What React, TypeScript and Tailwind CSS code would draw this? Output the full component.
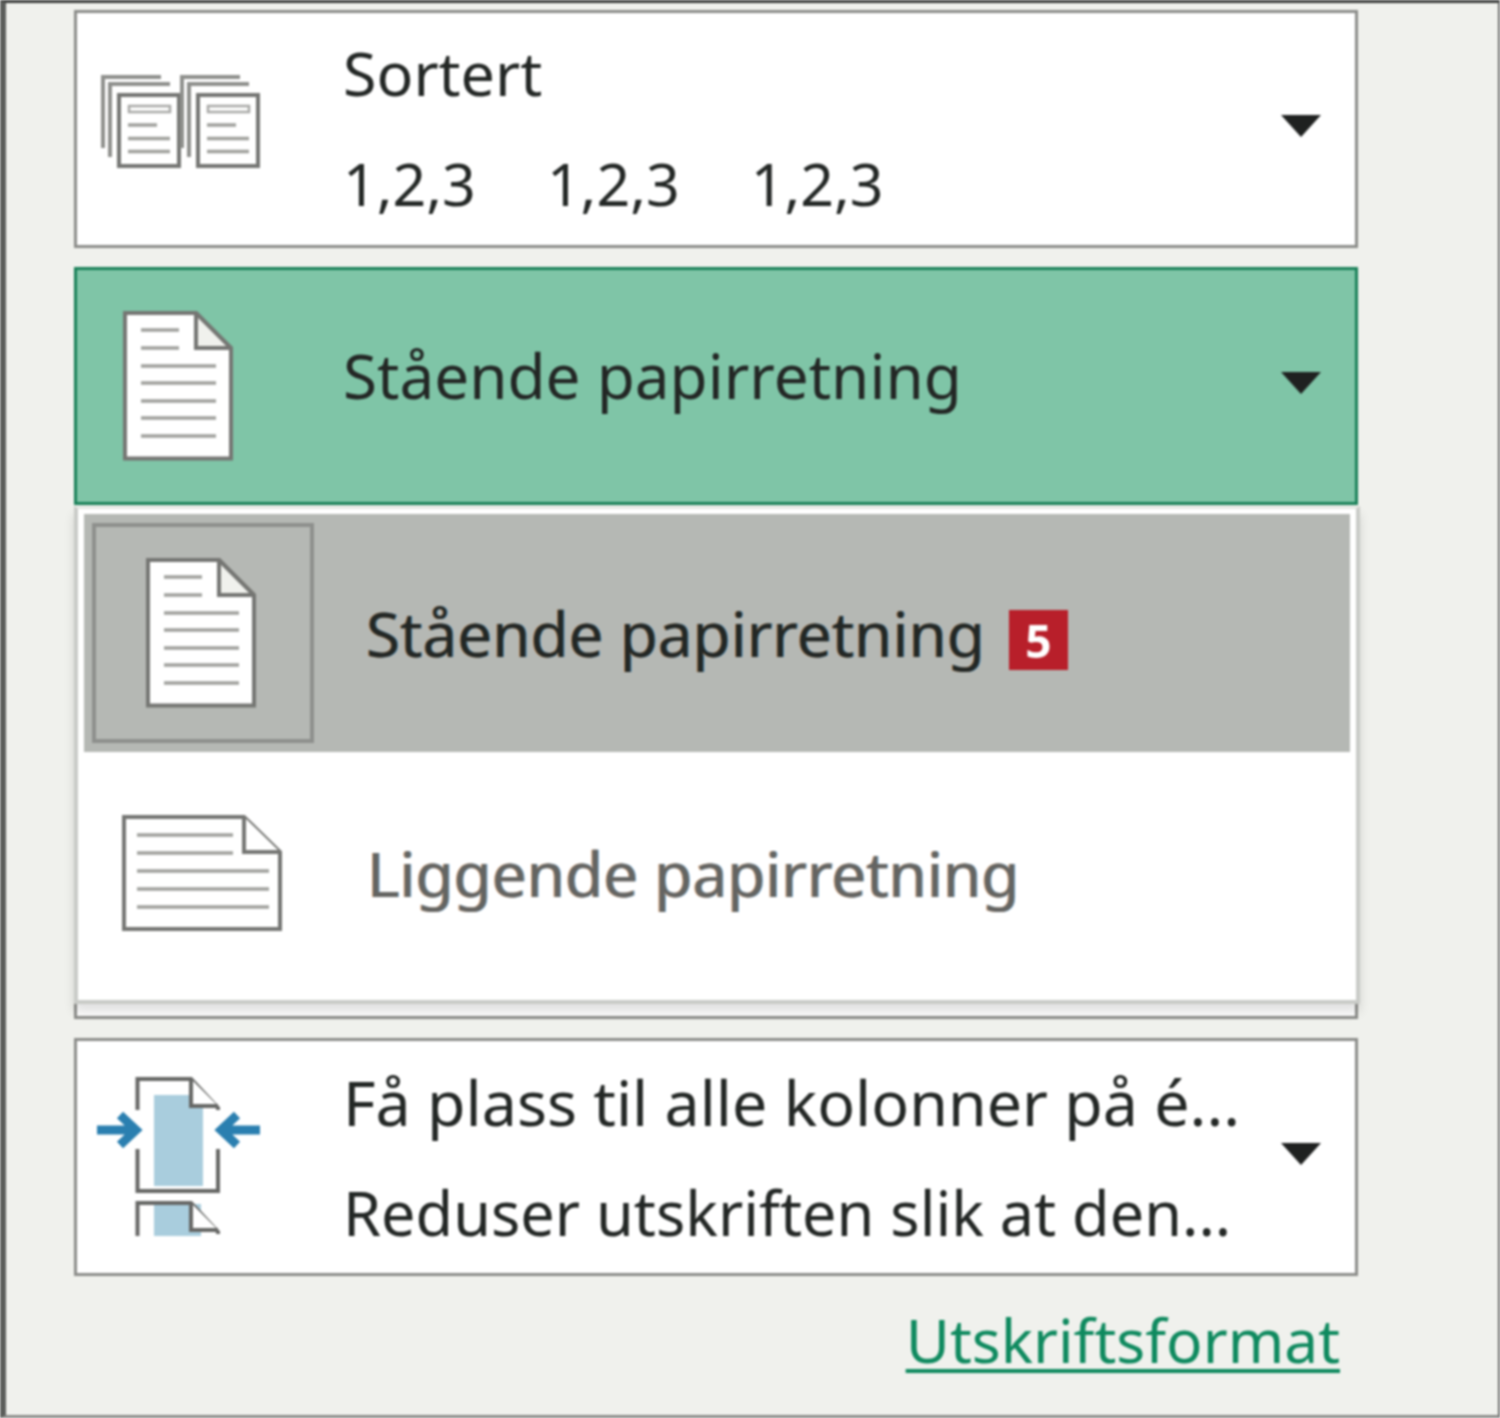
const lineColor = "#a0a19d";
const edge = "#757673";

function CollateSheet({ x }: { x: number }) {
  return (
    <g fill="none">
      <path d={`M${x + 3} 74V3H${x + 61}`} stroke="#8f908d" strokeWidth="4" />
      <path d={`M${x + 10} 83V10H${x + 70}`} stroke="#8f908d" strokeWidth="4" />
      <rect x={x + 19} y="21" width="60" height="71" fill="#fff" stroke={edge} strokeWidth="4" />
      <rect x={x + 29} y="32" width="41" height="6" stroke="#a8a9a6" strokeWidth="2.500" />
      <path d={`M${x + 28} 51H${x + 57}M${x + 28} 64.500H${x + 70}M${x + 28} 77.500H${x + 70}`} stroke={lineColor} strokeWidth="3.500" />
    </g>
  );
}

function CollateIcon() {
  return (
    <svg width="162" height="95" viewBox="0 0 162 95" className="block">
      <CollateSheet x={0} />
      <CollateSheet x={79} />
    </svg>
  );
}

function PortraitIcon() {
  return (
    <svg width="110" height="150" viewBox="0 0 110 150" className="block">
      <path d="M2 2H73L108 37V147.500H2Z" fill="#fff" stroke={edge} strokeWidth="4" />
      <path d="M73 2V37H108Z" fill="#f0f1ed" stroke={edge} strokeWidth="4" />
      <path
        d="M18 19H56M18 37H56M18 55H93M18 72H93M18 90H93M18 107H93M18 125H93"
        stroke={lineColor}
        strokeWidth="3.500"
      />
    </svg>
  );
}

function LandscapeIcon() {
  return (
    <svg width="160" height="116" viewBox="0 0 160 116" className="block">
      <path d="M2 2H122L158 37V114H2Z" fill="#fff" stroke={edge} strokeWidth="4" />
      <path d="M122 2V37H158" fill="#fff" stroke={edge} strokeWidth="4" />
      <path d="M15 20H111M15 38H111M15 56H147M15 74H147M15 92H147" stroke={lineColor} strokeWidth="3.500" />
    </svg>
  );
}

function FitColumnsIcon() {
  return (
    <svg width="166" height="160" viewBox="0 0 166 160" className="block">
      <rect x="58" y="18" width="49" height="91" fill="#a9cddd" />
      <rect x="58" y="127" width="47" height="32" fill="#a9cddd" />
      <g fill="none" stroke="#666765" strokeWidth="4">
        <path d="M41.500 33V2H95L122 31V33" />
        <path d="M95 2V29H122" fill="#fff" />
        <path d="M41.500 72V114H122V72" />
        <path d="M41.500 159V126H95L122 155V157" />
        <path d="M95 126V153H122" fill="#fff" />
      </g>
      <path d="M1 53H38M24 38L40 53L24 68" fill="none" stroke="#2a7fb0" strokeWidth="9" />
      <path d="M164 53H127M141 38L125 53L141 68" fill="none" stroke="#2a7fb0" strokeWidth="9" />
    </svg>
  );
}

function Caret() {
  return (
    <svg width="40" height="22" viewBox="0 0 40 22" className="block">
      <path d="M0 0H40L20 22Z" fill="#1f2120" />
    </svg>
  );
}

function Card({
  active,
  offset,
  icon,
  children,
}: {
  active?: boolean;
  offset?: string;
  icon?: React.ReactNode;
  children?: React.ReactNode;
}) {
  return (
    <div
      className={
        active
          ? "flex h-[237.5px] items-center border-[3px] border-[#1a8159] bg-[#7fc5a7]"
          : "flex h-[237.5px] items-center border-[3px] border-[#8c8d8a] bg-white"
      }
    >
      <div className={`w-[266px] shrink-0 ${offset ?? ""}`}>{icon}</div>
      <div className="min-w-0 flex-1">{children}</div>
      <div className="mr-[34px] mb-[5px] shrink-0">
        <Caret />
      </div>
    </div>
  );
}

export default function App() {
  return (
    <div
      className="h-[1418px] w-[1500px] overflow-hidden border-t-[3px] border-r-[2px] border-b-[3px] border-l-[6px] border-t-[#3a3c3a] border-r-[#6b6c6a] border-b-[#8a8b88] border-l-[#5c5e5b] bg-[#f0f1ed] text-[60px] leading-none text-[#232725] blur-[1px]"
      style={{ fontFamily: '"Noto Sans", "Open Sans", sans-serif' }}
    >
      <div className="relative ml-[68px] flex w-[1284px] flex-col gap-[19.500px] pt-[7px]">
        <Card offset="pl-[23px] pb-[14px]" icon={<CollateIcon />}>
          <div className="flex flex-col gap-[28px] pb-[2px]">
            <div className="h-[83px] text-[61px] leading-[83px]">Sortert</div>
            <div className="flex h-[83px] gap-[71px] text-[59px] leading-[83px]">
              <span>1,2,3</span>
              <span>1,2,3</span>
              <span>1,2,3</span>
            </div>
          </div>
        </Card>
        <Card active offset="pl-[46px]" icon={<PortraitIcon />}>
          <div className="pb-[22px] text-[62px]">Stående papirretning</div>
        </Card>
        <Card />
        <Card />
        <Card offset="pl-[19px]" icon={<FitColumnsIcon />}>
          <div className="flex flex-col gap-[28px]">
            <div className="h-[83px] truncate text-[62.700px] leading-[83px]">Få plass til alle kolonner på é...</div>
            <div className="h-[83px] truncate text-[61.200px] leading-[83px]">Reduser utskriften slik at den...</div>
          </div>
        </Card>
        <div className="flex justify-end pt-[15px] pr-[18px]">
          <a className="text-[60.500px] text-[#0f8a5f] underline decoration-[4px] underline-offset-[6px]">Utskriftsformat</a>
        </div>

        <div className="absolute top-[503px] left-0 flex h-[498px] w-[1286px] flex-col border-[4px] border-t-[3px] border-[#c9cbc7] border-t-[#e6e8e4] bg-white px-[6px] pt-[5px] shadow-[0_8px_10px_rgba(0,0,0,0.12)]">
          <div className="flex h-[238px] shrink-0 items-center bg-[#b5b8b4] pl-[8px]">
            <div className="flex h-[220px] w-[222px] items-center justify-center border-[4px] border-[#8e908d] pr-[4px]">
              <PortraitIcon />
            </div>
            <span className="ml-[52px] text-[62px] [text-shadow:-1px_0_#b9804a,1px_0_#3f86b8]">Stående papirretning</span>
            <span className="mt-[14px] ml-[24px] flex h-[60px] w-[59px] items-center justify-center bg-[#b81f2a] text-[46px] font-bold text-white">
              5
            </span>
          </div>
          <div className="flex flex-1 items-center pb-[6px]">
            <div className="ml-[38px] w-[245px]">
              <LandscapeIcon />
            </div>
            <span className="text-[62px] text-[#646462] [text-shadow:-1px_0_#d9a070,1px_0_#6fa8d4]">
              Liggende papirretning
            </span>
          </div>
        </div>
      </div>
    </div>
  );
}
